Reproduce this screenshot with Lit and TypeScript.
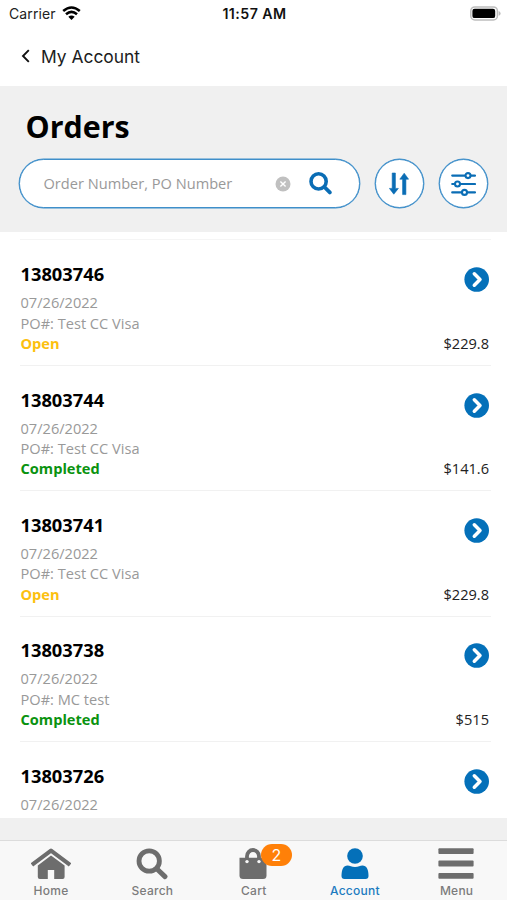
import { LitElement, html, css, svg } from "lit";
import { customElement, property } from "lit/decorators.js";
import { classMap } from "lit/directives/class-map.js";

interface Order {
  id: string;
  date: string;
  po?: string;
  status?: "Open" | "Completed";
  total?: string;
}

const ORDERS: Order[] = [
  { id: "13803746", date: "07/26/2022", po: "Test CC Visa", status: "Open", total: "$229.8" },
  { id: "13803744", date: "07/26/2022", po: "Test CC Visa", status: "Completed", total: "$141.6" },
  { id: "13803741", date: "07/26/2022", po: "Test CC Visa", status: "Open", total: "$229.8" },
  { id: "13803738", date: "07/26/2022", po: "MC test", status: "Completed", total: "$515" },
  { id: "13803726", date: "07/26/2022" },
];

@customElement("order-row")
class OrderRow extends LitElement {
  @property({ attribute: false }) order!: Order;

  static styles = css`
    :host {
      display: block;
      box-sizing: border-box;
      height: 125.4px;
      margin: 0 16px 0 20px;
      border-bottom: 1px solid #f1f1f1;
      padding: 20.8px 2px 0 0.5px;
      font-size: 14.6px;
      line-height: 20.3px;
      color: #999;
    }
    .top,
    .bottom {
      display: flex;
      justify-content: space-between;
    }
    .top {
      height: 31.1px;
    }
    .id {
      font-size: 18.3px;
      line-height: 25px;
      font-weight: 700;
      color: #000;
    }
    .go {
      display: block;
      margin: 6px 0 0;
    }
    .status {
      font-weight: 700;
      font-size: 14.6px;
      color: #fcc010;
    }
    .done {
      color: #0a930f;
    }
    .total {
      color: #222;
    }
  `;

  render() {
    const o = this.order;
    return html`
      <div class="top">
        <span class="id">${o.id}</span>
        <svg class="go" width="25" height="25" viewBox="0 0 25 25">
          <circle cx="12.7" cy="12.5" r="12.3" fill="#0470b9" />
          <path d="M10.3 6.8 L16 12.5 L10.3 18.2" fill="none" stroke="#fff" stroke-width="3.5" stroke-linecap="round" stroke-linejoin="round" />
        </svg>
      </div>
      <div>${o.date}</div>
      ${o.po ? html`<div>PO#: ${o.po}</div>` : null}
      ${o.status
        ? html`<div class="bottom">
            <span class=${classMap({ status: true, done: o.status === "Completed" })}>${o.status}</span>
            <span class="total">${o.total}</span>
          </div>`
        : null}
    `;
  }
}

const TAB_ICONS = {
  home: svg`
    <path d="M2.6 15.6 L20 2.6 L37.4 15.6" fill="none" stroke="currentColor" stroke-width="4.2" stroke-linecap="square" stroke-linejoin="round"/>
    <path d="M20 7.4 L33.6 17.6 V29 Q33.6 31 31.6 31 H23.2 V22 H16.8 V31 H8.8 Q6.8 31 6.8 29 V17.6 Z" fill="currentColor"/>`,
  search: svg`
    <circle cx="17.2" cy="13" r="10.2" fill="none" stroke="currentColor" stroke-width="4.8"/>
    <path d="M25 21 L33 28.6" stroke="currentColor" stroke-width="5" stroke-linecap="round"/>`,
  cart: svg`
    <path d="M6.5 9.8 H33.5 V27.5 Q33.5 31 30 31 H10 Q6.5 31 6.5 27.5 Z" fill="currentColor"/>
    <path d="M14 13 V8.2 A6 6.2 0 0 1 26 8.2 V13" fill="none" stroke="currentColor" stroke-width="3.8"/>
    <circle cx="14" cy="13.6" r="1.7" fill="#f8f8f8"/><circle cx="26" cy="13.6" r="1.7" fill="#f8f8f8"/>`,
  account: svg`
    <circle cx="20" cy="8" r="7.8" fill="currentColor"/>
    <path d="M6.5 28 C6.5 21.5 8.5 17.5 12.5 17.5 C15 17.5 16.5 19 20 19 C23.5 19 25 17.5 27.5 17.5 C31.5 17.5 33.5 21.5 33.5 28 Q33.5 31 30.5 31 H9.5 Q6.5 31 6.5 28 Z" fill="currentColor"/>`,
  menu: svg`
    <rect x="2.4" y="0.2" width="35.2" height="5.8" rx="1" fill="currentColor"/>
    <rect x="2.4" y="12.6" width="35.2" height="5.8" rx="1" fill="currentColor"/>
    <rect x="2.4" y="25" width="35.2" height="5.8" rx="1" fill="currentColor"/>`,
};

const TABS: { label: string; icon: keyof typeof TAB_ICONS; badge?: number; active?: boolean }[] = [
  { label: "Home", icon: "home" },
  { label: "Search", icon: "search" },
  { label: "Cart", icon: "cart", badge: 2 },
  { label: "Account", icon: "account", active: true },
  { label: "Menu", icon: "menu" },
];

@customElement("tab-bar")
class TabBar extends LitElement {
  static styles = css`
    :host {
      display: grid;
      flex: none;
      grid-template-columns: repeat(5, 1fr);
      box-sizing: border-box;
      height: 60px;
      border-top: 1px solid #dcdcdc;
      background: #f8f8f8;
      font-family: Inter, sans-serif;
    }
    .tab {
      position: relative;
      display: flex;
      flex-direction: column;
      align-items: center;
      padding-top: 7px;
      color: #6d6d6d;
    }
    .active {
      color: #0470b9;
    }
    .icon {
      display: block;
      flex: none;
    }
    .label {
      margin-top: 3px;
      padding-left: 0.6px;
      font-size: 12px;
      line-height: 16px;
      font-weight: 500;
      letter-spacing: 0.25px;
      color: #7c7c7c;
    }
    .active .label {
      padding-left: 0;
      color: #1c7bc0;
    }
    .badge {
      position: absolute;
      left: 58px;
      top: 3px;
      width: 31px;
      height: 22px;
      border-radius: 11px;
      background: #ff8008;
      color: #fff;
      font-size: 16px;
      line-height: 22px;
      text-align: center;
    }
  `;

  render() {
    return TABS.map(
      (t) => html`
        <div class=${classMap({ tab: true, active: !!t.active })}>
          <svg class="icon" width="40" height="32" viewBox="0 0 40 32">${TAB_ICONS[t.icon]}</svg>
          <span class="label">${t.label}</span>
          ${t.badge ? html`<span class="badge">${t.badge}</span>` : null}
        </div>
      `
    );
  }
}

@customElement("app-root")
class AppRoot extends LitElement {
  static styles = css`
    :host {
      display: flex;
      flex-direction: column;
      width: 100%;
      height: 900px;
      overflow: hidden;
      background: #fff;
      font-family: "Open Sans", sans-serif;
    }
    .status-bar {
      display: grid;
      grid-template-columns: 1fr auto 1fr;
      align-items: center;
      flex: none;
      height: 27px;
      padding: 0 6px 0 9px;
      font-family: Inter, sans-serif;
      font-size: 14px;
      color: #222;
    }
    .carrier {
      display: flex;
      align-items: center;
      gap: 6px;
      letter-spacing: 0.1px;
    }
    .time {
      font-weight: 600;
      font-size: 14.2px;
      letter-spacing: 0.45px;
      color: #111;
      transform: translateX(-0.5px);
    }
    .battery {
      justify-self: end;
      margin-top: -1px;
    }
    .back {
      display: flex;
      align-items: center;
      flex: none;
      gap: 10px;
      height: 59px;
      box-sizing: border-box;
      padding: 0 0 1px 21px;
      font-family: Inter, sans-serif;
      font-size: 17.4px;
      color: #1c1c1c;
    }
    .head {
      flex: none;
      box-sizing: border-box;
      height: 146px;
      padding: 20px 19px 0;
      background: #f0f0f0;
    }
    .title {
      margin: 0 0 0 6.5px;
      font-size: 30.4px;
      line-height: 41px;
      font-weight: 700;
      color: #000;
    }
    .tools {
      display: flex;
      margin-top: 12px;
    }
    .search,
    .round {
      box-sizing: border-box;
      height: 49px;
      border: 1.5px solid #3f8fca;
      border-radius: 25px;
      background: #fff;
      box-shadow: 0 0 0 0.4px #3f8fca;
    }
    .search {
      display: flex;
      align-items: center;
      width: 341px;
      padding: 0 27px 0 23.5px;
    }
    .placeholder {
      flex: 1;
      padding-bottom: 2px;
      font-size: 14.6px;
      color: #999;
    }
    .clear {
      margin-right: 18.5px;
    }
    .round {
      display: grid;
      place-items: center;
      width: 49px;
      margin-left: 14.8px;
    }
    .list {
      flex: none;
      height: 586px;
      overflow: hidden;
    }
    .rule {
      height: 1px;
      margin: 7.4px 16px 0 20px;
      background: #f5f5f5;
    }
    .gap {
      flex: none;
      height: 22px;
      background: #f0f0f0;
    }
  `;

  render() {
    return html`
      <div class="status-bar">
        <div class="carrier">
          <span>Carrier</span>
          <svg width="19" height="15" viewBox="0 0 19 15">
            <g fill="none" stroke="#000" stroke-width="2.6">
              <path d="M1.2 5 Q9.5 -2 17.8 5" />
              <path d="M4 8.3 Q9.5 3.6 15 8.3" />
            </g>
            <path d="M9.5 14 L6.3 10.8 Q9.5 8.2 12.7 10.8 Z" fill="#000" />
          </svg>
        </div>
        <div class="time">11:57 AM</div>
        <svg class="battery" width="31" height="15" viewBox="0 0 31 15">
          <rect x="0.8" y="0.9" width="26.6" height="13" rx="4" fill="#fff" stroke="#bdbdbd" stroke-width="1.5" />
          <rect x="2.4" y="2.7" width="22.8" height="9.4" rx="2.2" fill="#000" />
          <path d="M28.6 5 Q30.6 5.6 30.6 7.4 Q30.6 9.2 28.6 9.8 Z" fill="#bdbdbd" />
        </svg>
      </div>
      <div class="back">
        <svg width="10" height="14" viewBox="0 0 10 14">
          <path d="M7.8 1.2 L2 7 L7.8 12.8" fill="none" stroke="#111" stroke-width="1.9" />
        </svg>
        <span>My Account</span>
      </div>
      <div class="head">
        <h1 class="title">Orders</h1>
        <div class="tools">
          <div class="search">
            <span class="placeholder">Order Number, PO Number</span>
            <svg class="clear" width="16" height="16" viewBox="0 0 16 16">
              <circle cx="8" cy="8" r="7.5" fill="#c0c0c0" />
              <path d="M5.4 5.4 L10.6 10.6 M10.6 5.4 L5.4 10.6" stroke="#fff" stroke-width="1.4" />
            </svg>
            <svg width="23" height="23" viewBox="0 0 23 23">
              <circle cx="9.6" cy="9.4" r="7.6" fill="none" stroke="#0a6db5" stroke-width="3.6" />
              <path d="M15.4 15 L20.8 20.4" stroke="#0a6db5" stroke-width="3.8" stroke-linecap="round" />
            </svg>
          </div>
          <div class="round">
            <svg width="20" height="24" viewBox="0 0 20 24">
              <g fill="#0a6db5" stroke="#0a6db5" stroke-width="0.6" stroke-linejoin="round">
                <path d="M3.2 1 H6.4 V16.4 H9.4 L4.8 22.2 L0.4 16.4 H3.2 Z" />
                <path d="M13.6 22.6 V7.2 H10.8 L15.2 1.2 L19.6 7.2 H16.9 V22.6 Z" />
              </g>
            </svg>
          </div>
          <div class="round">
            <svg width="25" height="24" viewBox="0 0 25 24">
              <g stroke="#0a6db5" stroke-width="2.1" stroke-linecap="round" fill="none">
                <path d="M1.2 3.6 H24 M1.2 12 H24 M1.2 20.4 H24" />
                <circle cx="17" cy="3.6" r="2.5" fill="#fff" />
                <circle cx="6.5" cy="12" r="2.5" fill="#fff" />
                <circle cx="13.5" cy="20.4" r="2.5" fill="#fff" />
              </g>
            </svg>
          </div>
        </div>
      </div>
      <div class="list">
        <div class="rule"></div>
        ${ORDERS.map((o) => html`<order-row .order=${o}></order-row>`)}
      </div>
      <div class="gap"></div>
      <tab-bar></tab-bar>
    `;
  }
}
